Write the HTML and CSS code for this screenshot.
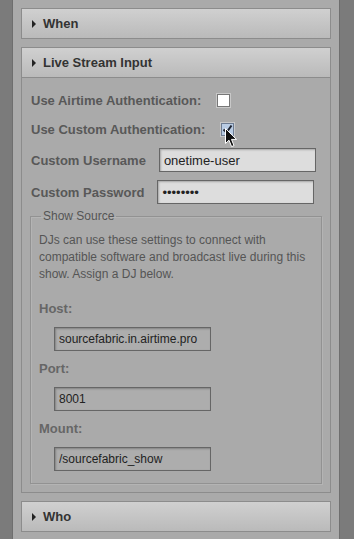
FILE: index.html
```html
<!DOCTYPE html>
<html lang="en">
<head>
  <meta charset="UTF-8" />
  <meta name="viewport" content="width=device-width, initial-scale=1.0" />
  <title>Add Show - Live Stream Input</title>
  <link rel="stylesheet" href="styles.css">
</head>
<body>
  <div class="page">
    <div class="section">
      <div class="section-head"><span class="arrow"></span>When</div>
    </div>

    <div class="section">
      <div class="section-head"><span class="arrow"></span>Live Stream Input</div>
      <div class="section-body">
        <div class="row row-1">
          <label>Use Airtime Authentication:</label>
          <span class="checkbox"></span>
        </div>
        <div class="row row-2">
          <label>Use Custom Authentication:</label>
          <span class="checkbox checked">
            <svg width="11" height="11" viewBox="0 0 11 11"><path d="M1.5 5.5 L4.5 8.5 L9.5 1.5" fill="none" stroke="#1d2330" stroke-width="2"/></svg>
          </span>
        </div>
        <div class="row row-3">
          <label>Custom Username</label>
          <input type="text" class="text-input light" value="onetime-user">
        </div>
        <div class="row row-4">
          <label>Custom Password</label>
          <input type="password" class="text-input light" value="password">
        </div>

        <fieldset class="source">
          <legend>Show Source</legend>
          <p>DJs can use these settings to connect with compatible software and broadcast live during this show. Assign a DJ below.</p>
          <div class="field">
            <label>Host:</label>
            <input type="text" class="text-input" value="sourcefabric.in.airtime.pro">
          </div>
          <div class="field">
            <label>Port:</label>
            <input type="text" class="text-input" value="8001">
          </div>
          <div class="field">
            <label>Mount:</label>
            <input type="text" class="text-input" value="/sourcefabric_show">
          </div>
        </fieldset>
      </div>
    </div>

    <div class="section">
      <div class="section-head"><span class="arrow"></span>Who</div>
    </div>

    <!-- mouse pointer over the checkbox -->
    <svg class="cursor" width="13" height="20" viewBox="0 0 13 20">
      <path d="M0.5 0.5 L0.5 15.5 L4 12.2 L6.6 18.6 L9 17.6 L6.5 11.4 L11.5 11.4 Z" fill="#111" stroke="#fff" stroke-width="1"/>
    </svg>
  </div>
</body>
</html>
```

FILE: styles.css
```css
body {
  margin: 0;
  background: #7b7b7b;
  font-family: "Liberation Sans", Arial, sans-serif;
  font-size: 12px;
}
.page {
  position: relative;
  margin: 0 14px 0 12px;
  height: 539px;
  box-sizing: border-box;
  padding: 8px 8px;
  background: #aaaaaa;
  border-left: 1px solid #6e6e6e;
  border-right: 1px solid #6e6e6e;
}
.section {
  margin-bottom: 8px;
}
.section-head {
  height: 29px;
  line-height: 29px;
  padding-left: 10px;
  border: 1px solid #8c8c8c;
  background: linear-gradient(#d0d0d0, #bababa);
  color: #333;
  font-weight: bold;
  font-size: 13px;
}
.arrow {
  display: inline-block;
  width: 0;
  height: 0;
  border-top: 4px solid transparent;
  border-bottom: 4px solid transparent;
  border-left: 4px solid #222;
  margin-right: 7px;
  vertical-align: 0;
}
.section-body {
  border: 1px solid #8c8c8c;
  border-top: none;
  padding: 10px 8px 8px;
}
.row {
  display: flex;
  align-items: center;
  height: 24px;
}
.row label {
  font-weight: bold;
  font-size: 13px;
  color: #585858;
  margin-left: 1px;
}
.row-2 { margin-top: 5px; }
.row-3 { margin-top: 7px; }
.row-4 { margin-top: 8px; }
.checkbox {
  display: inline-flex;
  align-items: center;
  justify-content: center;
  width: 11px;
  height: 11px;
  margin-left: 16px;
  background: #fff;
  border: 1px solid #777;
  box-shadow: 0 0 0 1px #c8c8c8;
}
.checkbox.checked {
  background: #b9cce4;
  border-color: #6d7c92;
}
.text-input {
  box-sizing: border-box;
  width: 157px;
  height: 24px;
  padding: 0 4px;
  border: 1px solid #666;
  background: #adadad;
  box-shadow: inset 1px 1px 2px rgba(0,0,0,0.25);
  font-family: "Liberation Sans", Arial, sans-serif;
  font-size: 12px;
  color: #222;
}
.text-input.light {
  background: #dddddd;
  margin-left: 13px;
  font-size: 13px;
}
.source {
  margin: 5px 0 0;
  padding: 0 8px 12px;
  border: 1px solid #929292;
  box-shadow: 1px 1px 0 #b4b4b4, inset 1px 1px 0 #b4b4b4;
}
.source legend {
  padding: 0 2px;
  margin-left: 2px;
  color: #555;
  font-size: 12px;
}
.source p {
  margin: 9px 0 0;
  line-height: 17px;
  color: #555;
}
.field {
  margin-top: 10px;
}
.source p + .field {
  margin-top: 18px;
}
.field label {
  display: block;
  font-weight: bold;
  color: #666;
  font-size: 13px;
  line-height: 16px;
}
.field .text-input {
  margin: 10px 0 0 15px;
}
.cursor {
  position: absolute;
  left: 212px;
  top: 128px;
}
```
